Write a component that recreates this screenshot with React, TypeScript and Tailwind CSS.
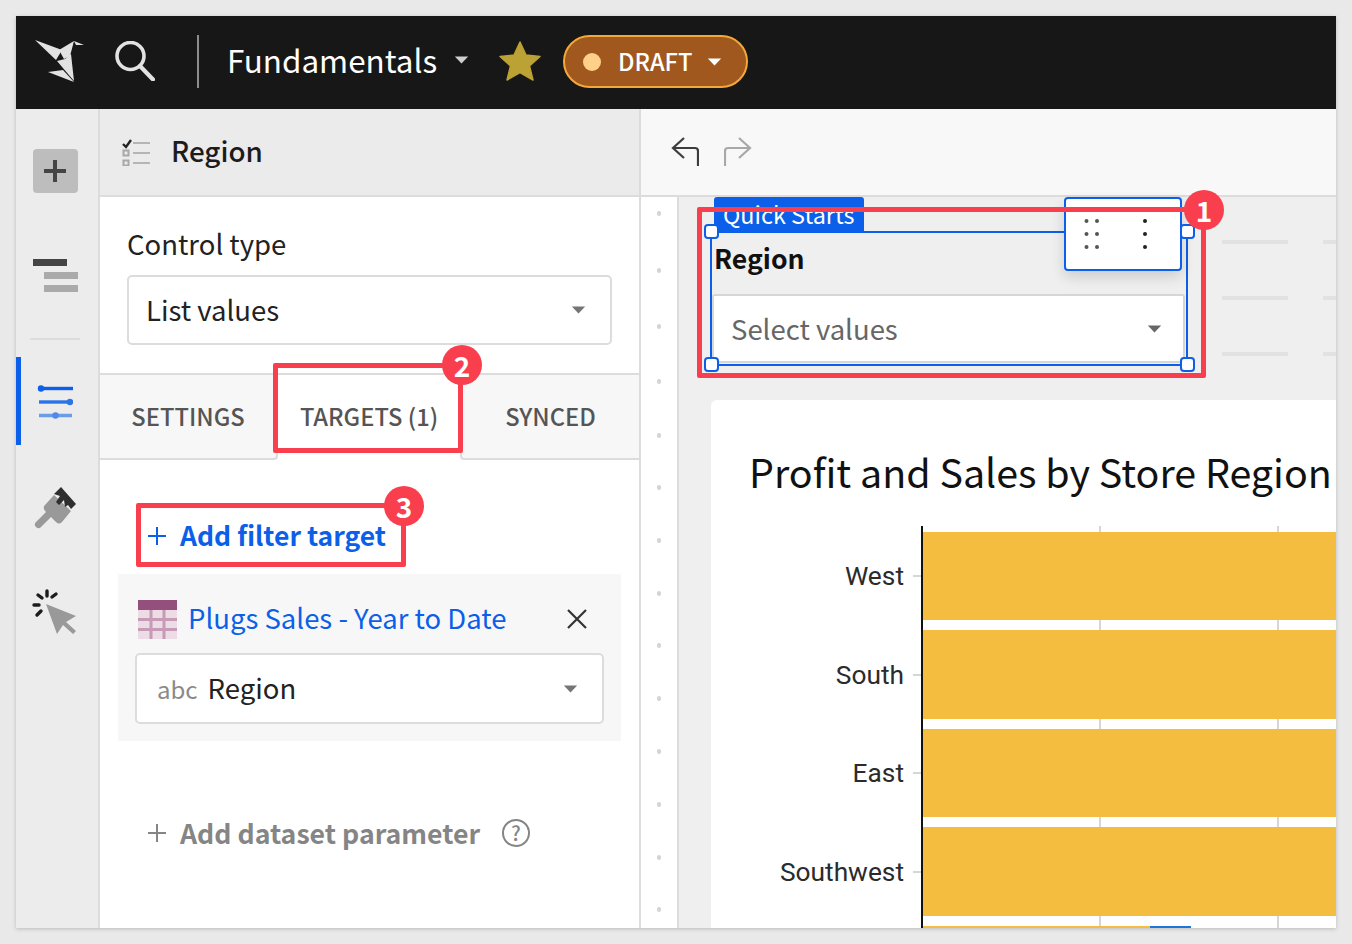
const dots = [213, 270, 326, 381, 435, 487, 540, 593, 645, 698, 751, 804, 857, 909];
const regions = ["West", "South", "East", "Southwest"];

function Caret({ className }: { className: string }) {
    return (
        <svg viewBox="0 0 16 9" className={className}>
            <path d="M0.5 0.5h15L8 8.5z" fill="currentColor" />
        </svg>
    );
}

function Badge({ n, className }: { n: number; className: string }) {
    return (
        <div className={`absolute w-10 h-10 rounded-full bg-[#f93f4d] text-white text-[28px] font-bold flex items-center justify-center leading-none ${className}`}>
            {n}
        </div>
    );
}

function Handle({ className }: { className: string }) {
    return <div className={`absolute w-[15px] h-[15px] bg-white border-2 border-[#0b5fe8] rounded-[4px] ${className}`} />;
}

function Logo() {
    return (
        <svg viewBox="0 0 50 46" className="w-[50px] h-[46px] absolute left-[19px] top-[23px]" fill="#e2e2e2">
            <path d="M0 1 L27 11 L21 21 Z" />
            <path d="M24 11 L39 2 L35 17 L29 20 Z" />
            <path d="M39 2 L49 6 L41 6 Z" />
            <path d="M36 15 L39 42 L22 22 L30 20 Z" />
            <path d="M13 33 L28 31 L39 43 Z" />
        </svg>
    );
}

function Header() {
    return (
        <div className="relative h-[93px] bg-[#171717] flex items-center shrink-0 pb-[2px]">
            <Logo />
            <svg viewBox="0 0 40 40" className="w-10 h-10 ml-[99px] -mt-[2px]" fill="none" stroke="#e2e2e2" strokeWidth="3.6" strokeLinecap="round">
                <circle cx="15.5" cy="15" r="13.5" />
                <path d="M25 25 L38 38.5" strokeWidth="4.2" />
            </svg>
            <div className="w-0.5 h-[53px] bg-[#8c8c8c] ml-[42px]" />
            <div className="text-white text-[31.4px] ml-[28px] leading-none -mt-[3px]">Fundamentals</div>
            <Caret className="w-[15px] h-2 ml-[17px] text-[#cfcfcf] -mt-[3px]" />
            <svg viewBox="0 0 42 42" className="w-[42px] h-[42px] ml-[30px] -mt-[2px]">
                <path d="M21 2 L27 15 L41 16.5 L30.5 26 L34 40 L21 32.5 L8 40 L11.5 26 L1 16.5 L15 15 Z" fill="#bca135" stroke="#bca135" strokeWidth="1.5" strokeLinejoin="round" />
            </svg>
            <div className="ml-[22px] w-[185px] h-[53px] rounded-full bg-[#a0581e] border-2 border-[#f5a83a] flex items-center pl-[18px]">
                <div className="w-[18px] h-[18px] rounded-full bg-[#ffd08a]" />
                <span className="text-white text-[23.6px] font-medium ml-[17px] leading-none">DRAFT</span>
                <Caret className="w-[15px] h-2 ml-[15px] text-white" />
            </div>
        </div>
    );
}

function Rail() {
    return (
        <div className="relative w-[84px] shrink-0 bg-[#ececec] border-r-2 border-[#dcdcdc] flex flex-col items-center pr-1">
            <div className="w-[45px] h-[44px] mt-10 bg-[#bdbdbd] rounded-[4px] flex items-center justify-center">
                <svg viewBox="0 0 24 24" className="w-[24px] h-[24px]" fill="#444444">
                    <path d="M10 1h4v9h9v4h-9v9h-4v-9H1v-4h9z" />
                </svg>
            </div>
            <div className="mt-[66px] w-[45px] flex flex-col items-end gap-[6px]">
                <div className="w-[34px] h-[7px] bg-[#444444] self-start" />
                <div className="w-[34px] h-[7px] bg-[#aaaaaa]" />
                <div className="w-[34px] h-[7px] bg-[#aaaaaa]" />
            </div>
            <div className="w-[50px] h-0.5 bg-[#dcdcdc] mt-[46px]" />
            <div className="absolute left-0 top-[248px] w-[5px] h-[88px] bg-[#0b5fe8]" />
            <svg viewBox="0 0 36 36" className="w-9 h-9 mt-[45px]" fill="none">
                <path d="M4 3.5h32" stroke="#0b5fe8" strokeWidth="3.4" />
                <circle cx="4" cy="3.5" r="3.2" fill="#0b5fe8" />
                <path d="M2 17h32" stroke="#2b74e8" strokeWidth="3.4" />
                <circle cx="33" cy="17" r="3.2" fill="#2b74e8" />
                <path d="M2 30.5h33" stroke="#6a9ce8" strokeWidth="3.4" />
                <circle cx="18.5" cy="30.5" r="3.2" fill="#4f8ae8" />
            </svg>
            <svg viewBox="0 0 42 42" className="w-[42px] h-[42px] mt-[66px]">
                <path d="M20 8 L37 24 L28 35 Q25 38 22 35 L17 30 L7 40 A3.5 3.5 0 0 1 2 35 L12 25 Q8 21 11 18 Z" fill="#999999" />
                <path d="M27 0 L42 17 L37 22 L34 18 L31 20 L30 13 L25 18 L22 15 L26 9 L20 7 Z" fill="#2e2e2e" />
            </svg>
            <svg viewBox="0 0 46 46" className="w-[46px] h-[46px] mt-[60px]" fill="none">
                <path d="M14 15 L44 27 L34 33 L44 42 L41 45 L31 36 L25 45 Z" fill="#999999" />
                <g stroke="#1c1c1c" strokeWidth="3.4" strokeLinecap="round">
                    <path d="M15 2v5" />
                    <path d="M6 6l4 3" />
                    <path d="M24 5l-4 3" />
                    <path d="M2 16h5" />
                    <path d="M5 26l4-4" />
                </g>
            </svg>
        </div>
    );
}

function ListIcon() {
    return (
        <svg viewBox="0 0 30 28" className="w-[30px] h-[28px] ml-[21px]" fill="none">
            <path d="M2 6 L5 9 L10 2" stroke="#222222" strokeWidth="2.4" />
            <path d="M12 5h17M12 15h17M12 25h17" stroke="#b5b5b5" strokeWidth="2" />
            <path d="M2.5 12.5h5v5h-5zM2.5 22.5h5v5h-5z" stroke="#a8a8a8" strokeWidth="2" />
        </svg>
    );
}

function Panel() {
    return (
        <div className="w-[541px] shrink-0 flex flex-col bg-white border-r-2 border-[#dcdcdc]">
            <div className="h-[88px] shrink-0 bg-[#ebebeb] border-b-2 border-[#dcdcdc] flex items-center">
                <ListIcon />
                <span className="ml-[20px] text-[27.8px] font-medium text-[#1c1c1c] -mt-[2px]">Region</span>
            </div>

            <div className="h-[176px] shrink-0 px-[27px] pt-[26px]">
                <div className="text-[27.5px] leading-[40px] text-[#222222]">Control type</div>
                <div className="mt-[12px] h-[70px] border-2 border-[#dcdcdc] rounded-[5px] flex items-center justify-between pl-[17px] pr-[24px]">
                    <span className="text-[27.5px] text-[#222222]">List values</span>
                    <Caret className="w-[15px] h-2 text-[#757575]" />
                </div>
            </div>

            <div className="h-[87px] shrink-0 flex bg-white border-t-2 border-[#dcdcdc] text-[23.7px] font-medium text-[#555555]">
                <div className="w-[178px] bg-[#f7f7f7] border-b-2 border-r-2 border-[#dcdcdc] rounded-br-[4px] flex items-center justify-center">SETTINGS</div>
                <div className="w-[182px] flex items-center justify-center pb-0.5">TARGETS (1)</div>
                <div className="flex-1 bg-[#f7f7f7] border-b-2 border-l-2 border-[#dcdcdc] rounded-bl-[4px] flex items-center justify-center">SYNCED</div>
            </div>

            <div className="h-[114px] shrink-0 flex items-center pl-[48px] pt-[36px] text-[#0b5fe8]">
                <svg viewBox="0 0 18 18" className="w-[18px] h-[18px] mt-[2px]" stroke="currentColor" strokeWidth="2">
                    <path d="M9 0v18M0 9h18" />
                </svg>
                <span className="ml-[14px] text-[26.5px] font-semibold leading-none">Add filter target</span>
            </div>

            <div className="ml-[18px] w-[503px] h-[167px] shrink-0 bg-[#f7f7f7] px-[17px] pt-[26px]">
                <div className="flex items-center h-[38px]">
                    <svg viewBox="0 0 39 39" className="w-[39px] h-[39px] ml-[3px] shrink-0">
                        <rect width="39" height="39" fill="#ecdce6" />
                        <rect width="39" height="10" fill="#944f7c" />
                        <path d="M0 19.5h39M0 29.5h39M13 10v29M26 10v29" stroke="#c79ab6" strokeWidth="3" />
                    </svg>
                    <span className="ml-[11px] text-[27.5px] text-[#0b5fe8] leading-none -mt-[3px]">Plugs Sales - Year to Date</span>
                    <svg viewBox="0 0 20 20" className="w-5 h-5 ml-auto mr-[17px]" stroke="#333333" strokeWidth="2.2">
                        <path d="M1 1l18 18M19 1L1 19" />
                    </svg>
                </div>
                <div className="mt-[15px] h-[71px] bg-white border-2 border-[#dcdcdc] rounded-[5px] flex items-center pl-[20px] pr-[24px]">
                    <span className="text-[24px] text-[#8a8a8a] leading-none">abc</span>
                    <span className="ml-[10px] text-[27.5px] text-[#222222] leading-none -mt-[2px]">Region</span>
                    <Caret className="w-[15px] h-2 ml-auto text-[#757575]" />
                </div>
            </div>

            <div className="flex items-center pl-[48px] mt-[74px] text-[#858585]">
                <svg viewBox="0 0 18 18" className="w-[18px] h-[18px]" stroke="currentColor" strokeWidth="2">
                    <path d="M9 0v18M0 9h18" />
                </svg>
                <span className="ml-[14px] text-[26.7px] font-semibold leading-[36px]">Add dataset parameter</span>
                <div className="ml-[22px] w-[28px] h-[28px] border-2 border-[#858585] rounded-full flex items-center justify-center text-[20px] font-medium leading-none">?</div>
            </div>
        </div>
    );
}

function Chart() {
    return (
        <div className="ml-[32px] mt-[34px] flex-1 bg-white rounded-tl-[6px] overflow-hidden">
            <div className="pl-[38px] pt-[44px] h-[126px] text-[39.4px] leading-[54px] text-[#111111] whitespace-nowrap">
                Profit and Sales by Store Region
            </div>
            <div className="relative flex h-[402px]">
                <div className="w-[210px] shrink-0 pt-[1px] font-['Roboto',sans-serif] text-[26.3px] text-[#2b2b2b]">
                    {regions.map((r) => (
                        <div key={r} className="h-[98.5px] flex items-center justify-end pr-[17px] relative leading-none">
                            {r}
                            <div className="absolute right-0 top-[48px] w-[8px] h-0.5 bg-[#d6d6d6]" />
                        </div>
                    ))}
                </div>
                <div className="relative flex-1 border-l-2 border-[#111111] pt-[6px]">
                    <div className="absolute left-[176px] top-0 bottom-0 w-0.5 bg-[#d6d6d6]" />
                    <div className="absolute left-[354px] top-0 bottom-0 w-0.5 bg-[#d6d6d6]" />
                    <div className="relative flex flex-col gap-[10px]">
                        <div className="h-[88px] bg-[#f5bd3f]" />
                        <div className="h-[89px] bg-[#f5bd3f]" />
                        <div className="h-[88px] bg-[#f5bd3f]" />
                        <div className="h-[89px] bg-[#f5bd3f]" />
                        <div className="h-[2px] flex">
                            <div className="w-[227px] bg-[#f5bd3f]" />
                            <div className="w-[41px] bg-[#1f74d8]" />
                        </div>
                    </div>
                </div>
            </div>
        </div>
    );
}

function Toolbar() {
    return (
        <div className="h-[88px] shrink-0 bg-[#f8f8f8] border-b-2 border-[#dcdcdc] flex items-center pl-[30px] gap-[25px]">
            <svg viewBox="0 0 28 30" className="w-7 h-[30px]" fill="none" stroke="#3d3d3d" strokeWidth="2.2">
                <path d="M27 29V14q0-3-3-3H2" />
                <path d="M13 1L2 11l11 10" />
            </svg>
            <svg viewBox="0 0 28 30" className="w-7 h-[30px]" fill="none" stroke="#a8a8a8" strokeWidth="2.2">
                <path d="M1 29V14q0-3 3-3h22" />
                <path d="M15 1l11 10-11 10" />
            </svg>
        </div>
    );
}

function Canvas() {
    return (
        <div className="relative flex-1 flex flex-col min-w-0 overflow-hidden">
            <Toolbar />
            <div className="flex-1 flex min-h-0">
                <div className="w-[36px] shrink-0 bg-white relative">
                    {dots.map((y) => (
                        <div key={y} className="absolute left-[16px] w-[4px] h-[5px] rounded-full bg-[#d4d4d4]" style={{ top: y - 199 }} />
                    ))}
                </div>
                <div className="flex-1 min-w-0 bg-[#efefef] border-l-2 border-[#dcdcdc] flex flex-col">
                    <div className="h-[171px] shrink-0 relative pl-[31px] pt-[34px]">
                        <div className="absolute left-[35px] top-0 w-[150px] h-[34px] bg-[#0b5fe8] rounded-t-[3px] text-white text-[23.4px] leading-[34px] pl-[9px] overflow-hidden whitespace-nowrap">
                            Quick Starts
                        </div>
                        <div className="w-[478px] h-[135px] border-2 border-[#0b5fe8] relative flex flex-col pt-[7px]">
                            <div className="pl-[2px] text-[26.6px] font-semibold text-[#111111] leading-[36px]">Region</div>
                            <div className="mt-[18px] h-[69px] mr-[1px] bg-white border-2 border-[#d6d6d6] rounded-[3px] flex items-center justify-between pl-[17px] pr-[21px]">
                                <span className="text-[27.5px] text-[#666666] leading-none">Select values</span>
                                <Caret className="w-[15px] h-2 text-[#666666]" />
                            </div>
                        </div>
                        <div className="absolute left-[385px] top-0 w-[118px] h-[74px] bg-white border-2 border-[#0b5fe8] rounded-[4px] shadow-[0_6px_14px_rgba(0,0,0,0.14)]">
                            <svg viewBox="0 0 114 70" className="w-full h-full" fill="#555555">
                                {[22, 35, 48].map((y) => (
                                    <g key={y}>
                                        <circle cx="20.5" cy={y} r="2" />
                                        <circle cx="31" cy={y} r="2" />
                                        <circle cx="79" cy={y} r="2" fill="#222222" />
                                    </g>
                                ))}
                            </svg>
                        </div>
                        <div className="absolute left-[543px] top-[43px] flex flex-col gap-[52px]">
                            {[0, 1, 2].map((i) => (
                                <div key={i} className="flex gap-[35px]">
                                    <div className="w-[66px] h-[4px] bg-[#e2e2e2]" />
                                    <div className="w-[66px] h-[4px] bg-[#e2e2e2]" />
                                </div>
                            ))}
                        </div>
                    </div>
                    <div className="h-[32px] shrink-0 -mb-[34px]" />
                    <Chart />
                </div>
            </div>
        </div>
    );
}

export default function App() {
    return (
        <div className="w-[1352px] h-[944px] bg-[#e9e9e9] p-4 font-['Noto_Sans_CJK_JP','Noto_Sans',sans-serif]">
            <div className="relative w-[1320px] h-[912px] flex flex-col overflow-hidden shadow-[0_1px_4px_rgba(0,0,0,0.2)]">
                <Header />
                <div className="flex-1 flex min-h-0">
                    <Rail />
                    <Panel />
                    <Canvas />
                </div>

                {/* annotations and selection handles sit above the page */}
                <Handle className="left-[688px] top-[208px]" />
                <Handle className="left-[1164px] top-[208px]" />
                <Handle className="left-[688px] top-[341px]" />
                <Handle className="left-[1164px] top-[341px]" />
                <div className="absolute left-[681px] top-[191px] w-[509px] h-[171px] border-[5px] border-[#f93f4d] rounded-[2px] pointer-events-none" />
                <div className="absolute left-[257px] top-[347px] w-[190px] h-[90px] border-[5px] border-[#f93f4d] rounded-[2px] pointer-events-none" />
                <div className="absolute left-[120px] top-[487px] w-[270px] h-[64px] border-[5px] border-[#f93f4d] rounded-[2px] pointer-events-none" />
                <Badge n={1} className="left-[1168px] top-[174px]" />
                <Badge n={2} className="left-[426px] top-[329px]" />
                <Badge n={3} className="left-[368px] top-[470px]" />
            </div>
        </div>
    );
}
